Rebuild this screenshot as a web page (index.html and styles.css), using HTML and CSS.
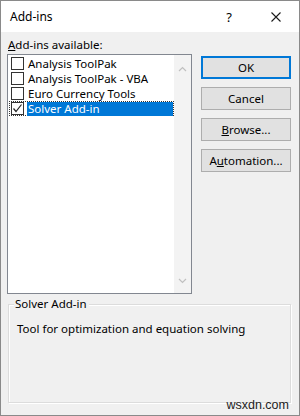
FILE: index.html
```html
<!DOCTYPE html>
<html>
<head>
<meta charset="utf-8">
<link rel="stylesheet" href="styles.css">
</head>
<body>
<div class="window">
  <div class="titlebar">
    <span class="title">Add-ins</span>
    <span class="help">?</span>
    <span class="close">
      <svg width="10" height="10" viewBox="0 0 10 10"><path d="M0.5 0.5L9.5 9.5M9.5 0.5L0.5 9.5" stroke="#1a1a1a" stroke-width="1.1" fill="none"/></svg>
    </span>
  </div>
  <div class="content">
    <div class="label"><u>A</u>dd-ins available:</div>
    <div class="main">
      <div class="listbox">
        <div class="items">
          <div class="item"><span class="cb"></span><span class="txt">Analysis ToolPak</span></div>
          <div class="item"><span class="cb"></span><span class="txt">Analysis ToolPak - VBA</span></div>
          <div class="item"><span class="cb"></span><span class="txt">Euro Currency Tools</span></div>
          <div class="item focus"><span class="cb checked"><svg width="11" height="11" viewBox="0 0 11 11"><path d="M1.5 5.5L4 8.5L9.5 1.5" stroke="#222" stroke-width="1.2" fill="none"/></svg></span><span class="txt sel">Solver Add-in</span></div>
        </div>
        <div class="scrollbar">
          <svg class="arrow" width="9" height="6" viewBox="0 0 9 6"><path d="M1 5L4.5 1.5L8 5" stroke="#c0c0c0" stroke-width="1.2" fill="none"/></svg>
          <svg class="arrow" width="9" height="6" viewBox="0 0 9 6"><path d="M1 1L4.5 4.5L8 1" stroke="#c0c0c0" stroke-width="1.2" fill="none"/></svg>
        </div>
      </div>
      <div class="buttons">
        <div class="btn default">OK</div>
        <div class="btn">Cancel</div>
        <div class="btn"><u>B</u>rowse...</div>
        <div class="btn">A<u>u</u>tomation...</div>
      </div>
    </div>
    <div class="group">
      <div class="legend">Solver Add-in</div>
      <div class="desc">Tool for optimization and equation solving</div>
    </div>
    <div class="watermark">wsxdn.com</div>
  </div>
</div>
</body>
</html>
```
FILE: styles.css
```css
html, body {
  margin: 0;
  padding: 0;
}
body {
  font-family: "Noto Sans", "Liberation Sans", sans-serif;
  font-size: 11.5px;
  color: #000;
}
.window {
  width: 300px;
  height: 416px;
  box-sizing: border-box;
  border: 1px solid #8a8a8a;
  background: #f0f0f0;
  display: flex;
  flex-direction: column;
}
.titlebar {
  height: 31px;
  background: #fff;
  display: flex;
  align-items: center;
  flex-shrink: 0;
}
.title {
  margin-left: 9px;
  font-size: 12px;
  flex: 1;
}
.help {
  width: 14px;
  text-align: center;
  margin-right: 35px;
  font-size: 13px;
}
.close {
  width: 10px;
  height: 10px;
  margin-right: 18px;
  display: flex;
}
.content {
  flex: 1;
  padding: 5px 7px 0 6px;
  display: flex;
  flex-direction: column;
  position: relative;
}
.label {
  height: 17px;
  line-height: 16px;
  padding-left: 1px;
}
.main {
  display: flex;
  gap: 9px;
  height: 240px;
}
.listbox {
  width: 185px;
  box-sizing: border-box;
  border: 1px solid #828790;
  background: #fff;
  display: flex;
}
.items {
  flex: 1;
  padding: 1px 0 0 2px;
  display: flex;
  flex-direction: column;
}
.item {
  height: 15px;
  display: flex;
  align-items: center;
  box-sizing: border-box;
}
.item.focus {
  border: 1px dotted #333;
  margin-left: -1px;
}
.cb {
  width: 13px;
  height: 13px;
  box-sizing: border-box;
  border: 1px solid #333;
  background: #fff;
  margin-left: 1px;
  display: flex;
  align-items: center;
  justify-content: center;
  flex-shrink: 0;
}
.txt {
  margin-left: 3px;
  line-height: 14px;
  padding: 0 1px;
  white-space: nowrap;
}
.txt.sel {
  background: #0078d7;
  color: #fff;
  flex: 1;
}
.scrollbar {
  width: 17px;
  background: #f3f3f3;
  display: flex;
  flex-direction: column;
  justify-content: space-between;
  align-items: center;
  padding: 11px 0 9px;
}
.buttons {
  display: flex;
  flex-direction: column;
  gap: 8px;
  padding-top: 2px;
}
.btn {
  width: 90px;
  height: 23px;
  box-sizing: border-box;
  border: 1px solid #adadad;
  background: #e1e1e1;
  display: flex;
  align-items: center;
  justify-content: center;
}
.btn.default {
  border: 2px solid #0078d7;
}
.group {
  margin-top: 10px;
  margin-left: 1px;
  width: 283px;
  height: 99px;
  box-sizing: border-box;
  border: 1px solid #dcdcdc;
  box-shadow: inset 1px 1px 0 #fff, 1px 1px 0 #fff;
  position: relative;
  padding: 16px 0 0 8px;
}
.legend {
  position: absolute;
  top: -9px;
  left: 5px;
  padding: 0 2px 0 1px;
  background: #f0f0f0;
  line-height: 16px;
}
.desc {
  line-height: 16px;
}
.watermark {
  position: absolute;
  right: 10px;
  bottom: 3px;
  font-family: "Liberation Sans", sans-serif;
  font-size: 12.5px;
  color: #222;
}
```
